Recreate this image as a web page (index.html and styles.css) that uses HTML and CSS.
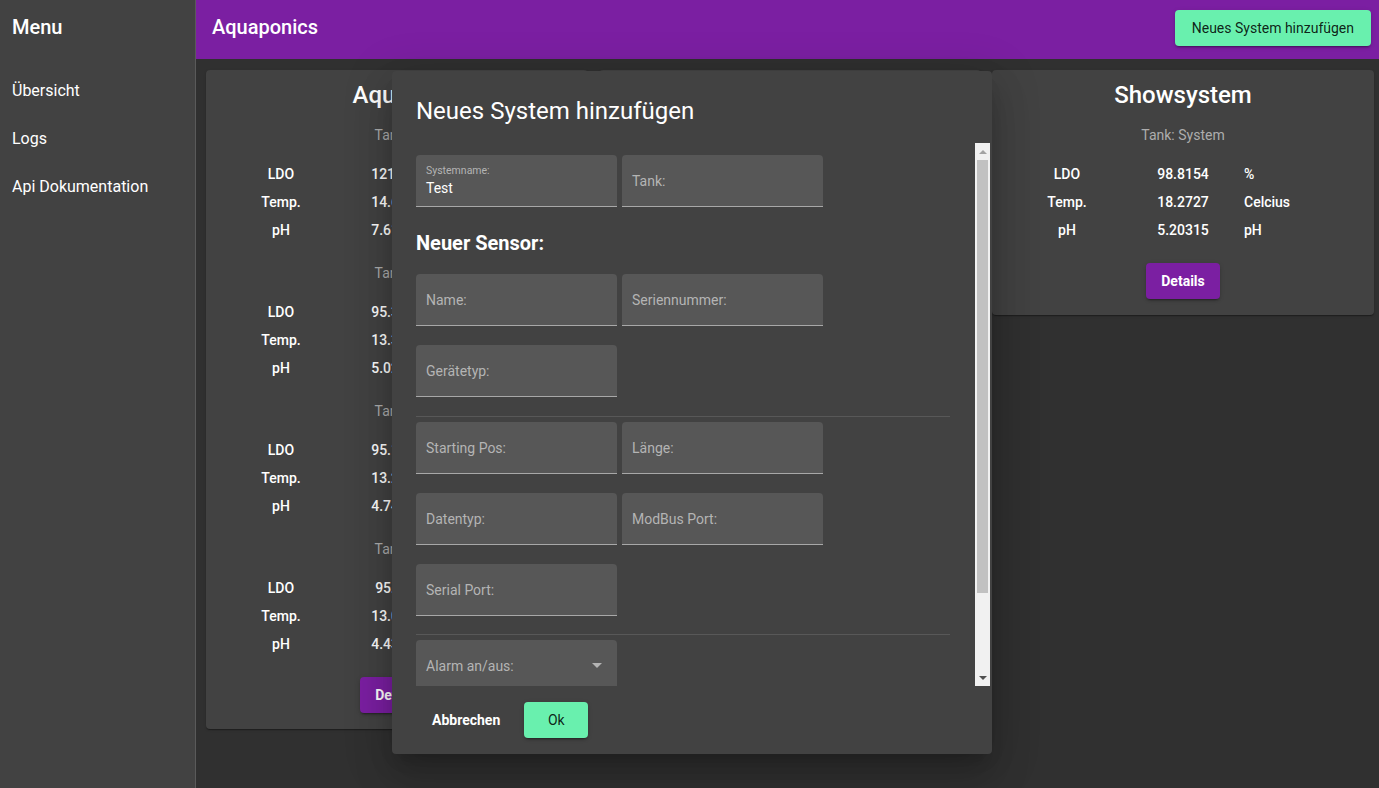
FILE: index.html
```html
<!DOCTYPE html>
<html lang="de">
<head>
<meta charset="utf-8">
<title>Aquaponics</title>
<link rel="stylesheet" href="styles.css">
</head>
<body>
<div class="app">
  <aside class="sidebar">
    <div class="menu-head">Menu</div>
    <nav class="menu">
      <a class="menu-item">Übersicht</a>
      <a class="menu-item">Logs</a>
      <a class="menu-item">Api Dokumentation</a>
    </nav>
  </aside>
  <div class="main">
    <header class="toolbar">
      <span class="toolbar-title">Aquaponics</span>
      <button class="btn-accent">Neues System hinzufügen</button>
    </header>
    <section class="cards">
      <article class="card">
        <h2 class="card-title">Aqua 01</h2>
        <div class="tank first">Tank: 1</div>
        <div class="rows">
          <span class="c1">LDO</span><span class="c2">121.354</span><span class="c3"></span>
          <span class="c1">Temp.</span><span class="c2">14.6281</span><span class="c3"></span>
          <span class="c1">pH</span><span class="c2">7.61237</span><span class="c3"></span>
        </div>
        <div class="tank">Tank: 2</div>
        <div class="rows">
          <span class="c1">LDO</span><span class="c2">95.3412</span><span class="c3"></span>
          <span class="c1">Temp.</span><span class="c2">13.3478</span><span class="c3"></span>
          <span class="c1">pH</span><span class="c2">5.02381</span><span class="c3"></span>
        </div>
        <div class="tank">Tank: 3</div>
        <div class="rows">
          <span class="c1">LDO</span><span class="c2">95.1127</span><span class="c3"></span>
          <span class="c1">Temp.</span><span class="c2">13.2193</span><span class="c3"></span>
          <span class="c1">pH</span><span class="c2">4.74512</span><span class="c3"></span>
        </div>
        <div class="tank">Tank: 4</div>
        <div class="rows">
          <span class="c1">LDO</span><span class="c2">95.861</span><span class="c3"></span>
          <span class="c1">Temp.</span><span class="c2">13.0912</span><span class="c3"></span>
          <span class="c1">pH</span><span class="c2">4.43218</span><span class="c3"></span>
        </div>
        <button class="btn-primary">Details</button>
      </article>
      <article class="card card-hidden"></article>
      <article class="card">
        <h2 class="card-title">Showsystem</h2>
        <div class="tank first">Tank: System</div>
        <div class="rows">
          <span class="c1">LDO</span><span class="c2">98.8154</span><span class="c3">%</span>
          <span class="c1">Temp.</span><span class="c2">18.2727</span><span class="c3">Celcius</span>
          <span class="c1">pH</span><span class="c2">5.20315</span><span class="c3">pH</span>
        </div>
        <button class="btn-primary">Details</button>
      </article>
    </section>
  </div>
</div>

<div class="dialog">
  <h1 class="dialog-title">Neues System hinzufügen</h1>
  <div class="dialog-content">
    <form class="form">
      <div class="row">
        <div class="field filled">
          <span class="float-label">Systemname:</span>
          <span class="value">Test</span>
        </div>
        <div class="field"><span class="label">Tank:</span></div>
      </div>
      <h3 class="section">Neuer Sensor:</h3>
      <div class="row">
        <div class="field"><span class="label">Name:</span></div>
        <div class="field"><span class="label">Seriennummer:</span></div>
      </div>
      <div class="row">
        <div class="field"><span class="label">Gerätetyp:</span></div>
      </div>
      <div class="divider"></div>
      <div class="row">
        <div class="field"><span class="label">Starting Pos:</span></div>
        <div class="field"><span class="label">Länge:</span></div>
      </div>
      <div class="row">
        <div class="field"><span class="label">Datentyp:</span></div>
        <div class="field"><span class="label">ModBus Port:</span></div>
      </div>
      <div class="row">
        <div class="field"><span class="label">Serial Port:</span></div>
      </div>
      <div class="divider second"></div>
      <div class="row">
        <div class="field select"><span class="label">Alarm an/aus:</span><span class="arrow"></span></div>
      </div>
    </form>
    <div class="scrollbar">
      <div class="sb-btn"><span class="sb-up"></span></div>
      <div class="sb-thumb"></div>
      <div class="sb-track"></div>
      <div class="sb-btn"><span class="sb-down"></span></div>
    </div>
  </div>
  <div class="dialog-actions">
    <button class="btn-flat">Abbrechen</button>
    <button class="btn-ok">Ok</button>
  </div>
</div>
</body>
</html>
```
FILE: styles.css
```css
* { box-sizing: border-box; }
html, body {
  margin: 0;
  height: 100%;
}
body {
  font-family: Roboto, "Noto Sans", sans-serif;
  background: #303030;
  color: #fff;
  overflow: hidden;
}
button {
  font-family: inherit;
  border: none;
  cursor: pointer;
}
.app {
  display: flex;
  height: 100vh;
}
.sidebar {
  width: 196px;
  flex: none;
  background: #424242;
  border-right: 1px solid #5a5a5a;
}
.menu-head {
  height: 54px;
  line-height: 54px;
  padding: 0 12px;
  font-size: 20px;
  font-weight: 500;
}
.menu {
  display: flex;
  flex-direction: column;
  margin-top: 13px;
}
.menu-item {
  height: 48px;
  line-height: 48px;
  padding: 0 12px;
  font-size: 16px;
  color: #fff;
}
.main {
  flex: 1;
  display: flex;
  flex-direction: column;
  min-width: 0;
}
.toolbar {
  height: 59px;
  background: #7b1fa2;
  display: flex;
  align-items: flex-start;
  justify-content: space-between;
  padding: 10px 8px 0 16px;
}
.toolbar-title {
  font-size: 20px;
  font-weight: 500;
  line-height: 32px;
  margin-top: 1px;
}
.btn-accent {
  height: 36px;
  padding: 0 17px;
  background: #69f0ae;
  color: rgba(0,0,0,0.87);
  font-size: 14px;
  border-radius: 4px;
  box-shadow: 0 3px 1px -2px rgba(0,0,0,.2), 0 2px 2px 0 rgba(0,0,0,.14), 0 1px 5px 0 rgba(0,0,0,.12);
}
.cards {
  display: flex;
  align-items: flex-start;
  gap: 11px;
  padding: 11px 0 0 10px;
}
.card {
  width: 382px;
  flex: none;
  background: #424242;
  border-radius: 4px;
  padding: 9px 0 16px;
  text-align: center;
  box-shadow: 0 2px 1px -1px rgba(0,0,0,.2), 0 1px 1px 0 rgba(0,0,0,.14), 0 1px 3px 0 rgba(0,0,0,.12);
}
.card-hidden {
  height: 600px;
}
.card-title {
  margin: 0;
  font-size: 24px;
  line-height: 32px;
  font-weight: 500;
}
.tank {
  margin-top: 19px;
  font-size: 14px;
  line-height: 20px;
  color: #adadad;
}
.tank.first { margin-top: 14px; }
.rows {
  margin-top: 15px;
  display: grid;
  grid-template-columns: 110px 100px 1fr;
  column-gap: 11px;
  padding-left: 20px;
  font-size: 14px;
  font-weight: 500;
}
.rows span {
  height: 28px;
  line-height: 28px;
}
.c3 { text-align: left; }
.btn-primary {
  margin-top: 19px;
  height: 36px;
  padding: 0 15px;
  background: #7b1fa2;
  color: #fff;
  font-size: 14px;
  font-weight: 700;
  border-radius: 4px;
  box-shadow: 0 3px 1px -2px rgba(0,0,0,.2), 0 2px 2px 0 rgba(0,0,0,.14), 0 1px 5px 0 rgba(0,0,0,.12);
}

/* dialog overlay */
.dialog {
  position: absolute;
  left: 392px;
  top: 71px;
  width: 600px;
  height: 683px;
  background: #424242;
  border-radius: 4px;
  display: flex;
  flex-direction: column;
  box-shadow: 0 11px 15px -7px rgba(0,0,0,.2), 0 24px 38px 3px rgba(0,0,0,.14), 0 9px 46px 8px rgba(0,0,0,.12);
}
.dialog-title {
  margin: 0 0 16px;
  padding: 24px 24px 0;
  font-size: 24px;
  line-height: 32px;
  font-weight: 400;
}
.dialog-content {
  height: 543px;
  display: flex;
  overflow: hidden;
}
.form {
  width: 558px;
  flex: none;
  padding: 12px 0 0 24px;
  margin: 0;
}
.row {
  display: flex;
  gap: 5px;
  margin-bottom: 19px;
}
.field {
  width: 201px;
  height: 52px;
  flex: none;
  background: #575757;
  border-radius: 4px 4px 0 0;
  border-bottom: 1px solid #a8a8a8;
  padding: 0 10px;
  display: flex;
  align-items: center;
  font-size: 14px;
  color: #b4b4b4;
}
.field.filled {
  flex-direction: column;
  align-items: flex-start;
  padding-top: 10px;
}
.float-label {
  font-size: 10.5px;
  line-height: 12px;
  color: #b4b4b4;
}
.value {
  margin-top: 2px;
  font-size: 14px;
  line-height: 18px;
  color: #fff;
}
.field.select {
  justify-content: space-between;
  padding-right: 15px;
}
.arrow {
  width: 0;
  height: 0;
  border-left: 5px solid transparent;
  border-right: 5px solid transparent;
  border-top: 5px solid #b4b4b4;
}
.section {
  margin: 0 0 15px;
  padding-top: 1px;
  font-size: 20px;
  line-height: 32px;
  font-weight: 700;
}
.divider {
  width: 534px;
  height: 1px;
  background: #585858;
  margin-bottom: 5px;
}
.divider.second { margin-top: -1px; }
.scrollbar {
  margin-left: auto;
  margin-right: 2px;
  width: 15px;
  flex: none;
  background: #f1f1f1;
  display: flex;
  flex-direction: column;
}
.sb-btn {
  height: 17px;
  flex: none;
  display: flex;
  align-items: center;
  justify-content: center;
}
.sb-up, .sb-down {
  width: 0;
  height: 0;
  border-left: 4px solid transparent;
  border-right: 4px solid transparent;
}
.sb-up { border-bottom: 4px solid #a3a3a3; }
.sb-down { border-top: 4px solid #505050; }
.sb-thumb {
  height: 433px;
  flex: none;
  margin: 0 2px;
  background: #c1c1c1;
}
.sb-track { flex: 1; }
.dialog-actions {
  height: 68px;
  display: flex;
  align-items: center;
  gap: 8px;
  padding: 0 24px;
}
.btn-flat {
  height: 36px;
  padding: 0 16px;
  background: transparent;
  color: #fff;
  font-size: 14px;
  font-weight: 700;
  border-radius: 4px;
}
.btn-ok {
  height: 36px;
  min-width: 64px;
  padding: 0 16px;
  background: #69f0ae;
  color: rgba(0,0,0,0.87);
  font-size: 14px;
  border-radius: 4px;
  box-shadow: 0 3px 1px -2px rgba(0,0,0,.2), 0 2px 2px 0 rgba(0,0,0,.14), 0 1px 5px 0 rgba(0,0,0,.12);
}
```
